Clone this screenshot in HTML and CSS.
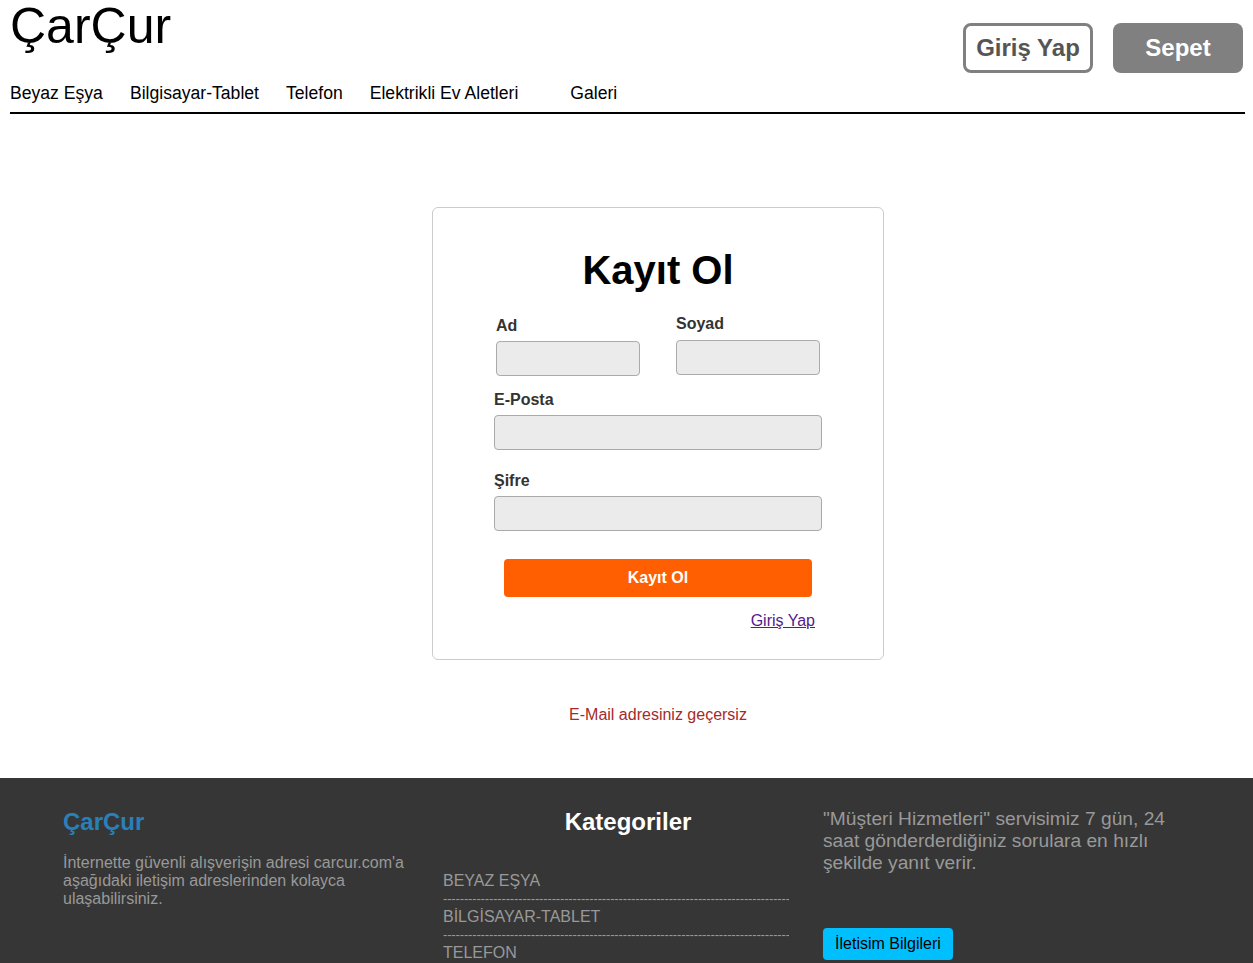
FILE: index.html
```html
<!DOCTYPE html>
<html lang="tr">
<head>
<meta charset="utf-8">
<title>ÇarÇur - Kayıt Ol</title>
<link rel="stylesheet" href="styles.css">
</head>
<body>
<header class="site-header">
  <div class="header-top">
    <div class="brand-col">
      <div class="logo">ÇarÇur</div>
      <nav class="main-nav">
        <a href="#" class="nav-link">Beyaz Eşya</a>
        <a href="#" class="nav-link">Bilgisayar-Tablet</a>
        <a href="#" class="nav-link">Telefon</a>
        <a href="#" class="nav-link">Elektrikli Ev Aletleri</a>
        <a href="#" class="nav-link nav-gallery">Galeri</a>
      </nav>
    </div>
    <div class="header-actions">
      <a href="#" class="btn-login">Giriş Yap</a>
      <a href="#" class="btn-cart">Sepet</a>
    </div>
  </div>
  <div class="header-rule"></div>
</header>

<main class="main">
  <form class="card">
    <h1 class="card-title">Kayıt Ol</h1>
    <div class="name-row">
      <div class="field field-ad">
        <label class="label label-ad">Ad</label>
        <input class="input input-half" type="text">
      </div>
      <div class="field field-soyad">
        <label class="label">Soyad</label>
        <input class="input input-half" type="text">
      </div>
    </div>
    <div class="field field-mail">
      <label class="label">E-Posta</label>
      <input class="input" type="text">
    </div>
    <div class="field field-pass">
      <label class="label">Şifre</label>
      <input class="input" type="password">
    </div>
    <button type="button" class="btn-submit">Kayıt Ol</button>
    <div class="login-row"><a href="#" class="login-link">Giriş Yap</a></div>
  </form>
  <p class="error">E-Mail adresiniz geçersiz</p>
</main>

<footer class="footer">
  <div class="footer-col">
    <h2 class="footer-brand">ÇarÇur</h2>
    <p class="footer-about">İnternette güvenli alışverişin adresi carcur.com'a aşağıdaki iletişim adreslerinden kolayca ulaşabilirsiniz.</p>
  </div>
  <div class="footer-col">
    <h2 class="footer-heading">Kategoriler</h2>
    <ul class="cat-list">
      <li class="cat-item">BEYAZ EŞYA</li>
      <li class="cat-sep">-----------------------------------------------------------------------------------</li>
      <li class="cat-item">BİLGİSAYAR-TABLET</li>
      <li class="cat-sep">-----------------------------------------------------------------------------------</li>
      <li class="cat-item">TELEFON</li>
      <li class="cat-sep">-----------------------------------------------------------------------------------</li>
      <li class="cat-item">ELEKTRİKLİ EV ALETLERİ</li>
    </ul>
  </div>
  <div class="footer-col">
    <p class="footer-service">"Müşteri Hizmetleri" servisimiz 7 gün, 24 saat gönderderdiğiniz sorulara en hızlı şekilde yanıt verir.</p>
    <a href="#" class="btn-contact">İletisim Bilgileri</a>
  </div>
</footer>
</body>
</html>
```

FILE: styles.css
```css
* { box-sizing: border-box; }

html, body {
  margin: 0;
  padding: 0;
  background: #fff;
  font-family: "Liberation Sans", Arial, sans-serif;
  color: #000;
}

/* Header */
.site-header {
  padding: 0 8px 0 10px;
}
.header-top {
  display: flex;
  justify-content: space-between;
  align-items: flex-start;
}
.brand-col {
  display: flex;
  flex-direction: column;
}
.logo {
  font-size: 50px;
  line-height: 50px;
  margin-top: 1px;
  font-weight: normal;
}
.main-nav {
  display: flex;
  margin-top: 32px;
  height: 29px;
}
.nav-link {
  font-size: 17.6px;
  line-height: 21px;
  color: #000;
  text-decoration: none;
  margin-right: 27px;
}
.nav-gallery {
  margin-left: 25px;
}
.header-actions {
  display: flex;
  gap: 20px;
  margin-top: 23px;
  margin-right: 2px;
}
.btn-login, .btn-cart {
  display: flex;
  align-items: center;
  justify-content: center;
  width: 130px;
  height: 50px;
  border-radius: 8px;
  font-size: 24px;
  font-weight: bold;
  text-decoration: none;
}
.btn-login {
  border: 3px solid #808080;
  color: #555;
  background: #fff;
}
.btn-cart {
  background: #808080;
  color: #fff;
}
.header-rule {
  height: 2px;
  background: #000;
}

/* Main */
.main {
  display: flex;
  flex-direction: column;
  align-items: center;
  padding: 93px 0 0 63px;
}
.card {
  width: 452px;
  border: 1px solid #ccc;
  border-radius: 6px;
  padding: 39px 61px 29px;
  display: flex;
  flex-direction: column;
}
.card-title {
  margin: 0;
  font-size: 40px;
  line-height: 46px;
  font-weight: bold;
  text-align: center;
}
.name-row {
  display: flex;
  margin-top: 22px;
}
.field {
  display: flex;
  flex-direction: column;
}
.field-ad {
  margin-left: 2px;
  padding-top: 2px;
}
.field-soyad {
  margin-left: 36px;
}
.label {
  font-size: 16px;
  line-height: 18px;
  font-weight: bold;
  color: #333;
  margin-bottom: 7px;
}
.label-ad {
  margin-bottom: 6px;
}
.input {
  height: 35px;
  width: 328px;
  background: #ebebeb;
  border: 1px solid #aaa;
  border-radius: 4px;
  font-family: inherit;
  font-size: 16px;
}
.input-half {
  width: 144px;
}
.field-mail {
  margin-top: 15px;
}
.field-mail .label { margin-bottom: 6px; }
.field-pass {
  margin-top: 22px;
}
.field-pass .label { margin-bottom: 6px; }
.btn-submit {
  margin: 28px 0 0 10px;
  width: 308px;
  height: 38px;
  border: none;
  border-radius: 4px;
  background: #ff5f00;
  color: #fff;
  font-family: inherit;
  font-size: 16px;
  font-weight: bold;
}
.login-row {
  display: flex;
  justify-content: flex-end;
  margin-top: 15px;
  padding-right: 7px;
}
.login-link {
  font-size: 16px;
  line-height: 18px;
  color: #551a8b;
}
.error {
  margin: 46px 0 54px;
  font-size: 16px;
  line-height: 18px;
  color: #a52a2a;
}

/* Footer */
.footer {
  background: #363636;
  display: grid;
  grid-template-columns: 370px 370px 370px;
  column-gap: 10px;
  padding: 30px 60px 40px 63px;
}
.footer-col {
  display: flex;
  flex-direction: column;
}
.footer-brand {
  margin: 0;
  font-size: 24px;
  line-height: 28px;
  font-weight: bold;
  color: #2980b9;
}
.footer-about {
  margin: 18px 0 0;
  font-size: 16px;
  line-height: 18px;
  color: #999;
}
.footer-heading {
  margin: 0;
  font-size: 24px;
  line-height: 28px;
  font-weight: bold;
  color: #fff;
  text-align: center;
}
.cat-list {
  list-style: none;
  margin: 36px 0 0;
  padding: 0;
}
.cat-item, .cat-sep {
  font-size: 16px;
  line-height: 18px;
  color: #999;
  white-space: nowrap;
}
.cat-sep {
  width: 346px;
  overflow: hidden;
  font-size: 13px;
  letter-spacing: -0.15px;
}
.footer-service {
  margin: 0;
  font-size: 19.2px;
  line-height: 22px;
  color: #999;
}
.btn-contact {
  align-self: flex-start;
  margin-top: 54px;
  width: 130px;
  height: 32px;
  display: flex;
  align-items: center;
  justify-content: center;
  background: #00bfff;
  color: #000;
  border-radius: 4px;
  font-size: 16px;
  text-decoration: none;
}
```
